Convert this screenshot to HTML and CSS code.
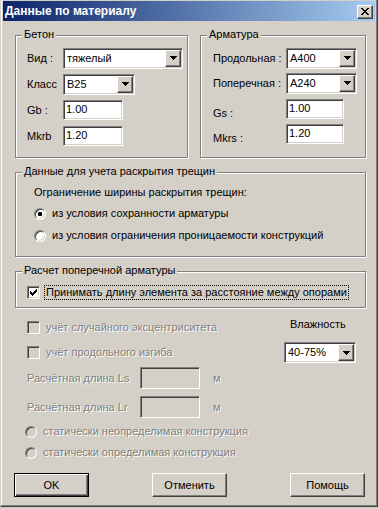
FILE: index.html
```html
<!DOCTYPE html>
<html lang="ru">
<head>
    <meta charset="UTF-8">
    <title>Данные по материалу</title>
    <link rel="stylesheet" href="styles.css">
</head>
<body>

    <div class="window">
        <div class="titlebar">
            <span class="title">Данные по материалу</span>
            <span class="close-btn">
                <svg width="8" height="7" viewBox="0 0 8 7" shape-rendering="crispEdges"><path d="M0 0h2v1H0zM6 0h2v1H6zM1 1h2v1H1zM5 1h2v1H5zM2 2h4v1H2zM3 3h2v1H3zM2 4h4v1H2zM1 5h2v1H1zM5 5h2v1H5zM0 6h2v1H0zM6 6h2v1H6z"/></svg>
            </span>
        </div>

        <div class="content">
            <div class="top-row">
                <div class="group concrete">
                    <span class="caption">Бетон</span>
                    <div class="form concrete-form">
                        <span class="label">Вид :</span>
                        <div class="combo w-120">
                            <span class="combo-text">тяжелый</span>
                            <span class="combo-btn"><svg width="7" height="4" viewBox="0 0 7 4" shape-rendering="crispEdges"><path d="M0 0h7v1H0zM1 1h5v1H1zM2 2h3v1H2zM3 3h1v1H3z"/></svg></span>
                        </div>
                        <span class="label">Класс</span>
                        <div class="combo w-72">
                            <span class="combo-text">B25</span>
                            <span class="combo-btn"><svg width="7" height="4" viewBox="0 0 7 4" shape-rendering="crispEdges"><path d="M0 0h7v1H0zM1 1h5v1H1zM2 2h3v1H2zM3 3h1v1H3z"/></svg></span>
                        </div>
                        <span class="label">Gb :</span>
                        <div class="field w-60">1.00</div>
                        <span class="label">Mkrb</span>
                        <div class="field w-60">1.20</div>
                    </div>
                </div>

                <div class="group rebar">
                    <span class="caption">Арматура</span>
                    <div class="form rebar-form">
                        <span class="label">Продольная :</span>
                        <div class="combo w-70">
                            <span class="combo-text">A400</span>
                            <span class="combo-btn"><svg width="7" height="4" viewBox="0 0 7 4" shape-rendering="crispEdges"><path d="M0 0h7v1H0zM1 1h5v1H1zM2 2h3v1H2zM3 3h1v1H3z"/></svg></span>
                        </div>
                        <span class="label">Поперечная :</span>
                        <div class="combo w-70">
                            <span class="combo-text">A240</span>
                            <span class="combo-btn"><svg width="7" height="4" viewBox="0 0 7 4" shape-rendering="crispEdges"><path d="M0 0h7v1H0zM1 1h5v1H1zM2 2h3v1H2zM3 3h1v1H3z"/></svg></span>
                        </div>
                        <span class="label low">Gs :</span>
                        <div class="field w-58">1.00</div>
                        <span class="label low">Mkrs :</span>
                        <div class="field w-58">1.20</div>
                    </div>
                </div>
            </div>

            <div class="group cracks">
                <span class="caption">Данные для учета раскрытия трещин</span>
                <div class="hint">Ограничение ширины раскрытия трещин:</div>
                <div class="option first">
                    <span class="radio checked"></span>
                    <span class="option-text">из условия сохранности арматуры</span>
                </div>
                <div class="option second">
                    <span class="radio"></span>
                    <span class="option-text">из условия ограничения проницаемости конструкций</span>
                </div>
            </div>

            <div class="group shear">
                <span class="caption">Расчет поперечной арматуры</span>
                <div class="option">
                    <span class="check">
                        <svg width="7" height="7" viewBox="0 0 7 7" shape-rendering="crispEdges"><path d="M0 2h1v3H0zM1 3h1v3H1zM2 4h1v3H2zM3 3h1v3H3zM4 2h1v3H4zM5 1h1v3H5zM6 0h1v3H6z"/></svg>
                    </span>
                    <span class="focus-text">Принимать длину элемента за расстояние между опорами</span>
                </div>
            </div>

            <div class="lower">
                <div class="lower-left">
                    <div class="option disabled">
                        <span class="check off"></span>
                        <span class="option-text">учёт случайного эксцентриситета</span>
                    </div>
                    <div class="option disabled row-2">
                        <span class="check off"></span>
                        <span class="option-text">учёт продольного изгиба</span>
                    </div>
                    <div class="length-row disabled row-ls">
                        <span class="length-label">Расчётная длина Ls</span>
                        <div class="field off w-60"></div>
                        <span class="unit">м</span>
                    </div>
                    <div class="length-row disabled row-lr">
                        <span class="length-label">Расчётная длина Lr</span>
                        <div class="field off w-60"></div>
                        <span class="unit">м</span>
                    </div>
                    <div class="option disabled static first-static">
                        <span class="radio off"></span>
                        <span class="option-text">статически неопределимая конструкция</span>
                    </div>
                    <div class="option disabled static second-static">
                        <span class="radio off"></span>
                        <span class="option-text">статически определимая конструкция</span>
                    </div>
                </div>

                <div class="lower-right">
                    <div class="humidity-label">Влажность</div>
                    <div class="combo w-72">
                        <span class="combo-text">40-75%</span>
                        <span class="combo-btn"><svg width="7" height="4" viewBox="0 0 7 4" shape-rendering="crispEdges"><path d="M0 0h7v1H0zM1 1h5v1H1zM2 2h3v1H2zM3 3h1v1H3z"/></svg></span>
                    </div>
                </div>
            </div>

            <div class="buttons">
                <div class="button default">OK</div>
                <div class="button">Отменить</div>
                <div class="button">Помощь</div>
            </div>
        </div>
    </div>

</body>
</html>
```

FILE: styles.css
```css
* {
    box-sizing: border-box;
}

body {
    margin: 0;
    padding: 0;
    background: #d4d0c8;
    font-family: "Liberation Sans", Arial, sans-serif;
    font-size: 11px;
    line-height: 13px;
    color: #000;
}

/* window frame */
.window {
    width: 378px;
    height: 507px;
    background: #d4d0c8;
    border: 1px solid;
    border-top: 0;
    border-color: #d4d0c8 #404040 #404040 #d4d0c8;
    box-shadow: inset -1px -1px 0 #808080, inset 1px 0 0 #fff;
    padding: 1px 2px 0 2px;
}

.titlebar {
    height: 20px;
    display: flex;
    justify-content: space-between;
    align-items: center;
    padding: 1px 2px 0 2px;
    background: linear-gradient(to right, #0a246a, #a6caf0);
}

.title {
    color: #fff;
    font-weight: bold;
    font-size: 12px;
}

.close-btn {
    width: 16px;
    height: 14px;
    display: flex;
    justify-content: center;
    align-items: center;
    background: #d4d0c8;
    border: 1px solid;
    border-color: #fff #404040 #404040 #fff;
    box-shadow: inset -1px -1px 0 #808080;
}

.content {
    padding: 14px 0 0 12px;
}

/* group boxes */
.group {
    position: relative;
    border: 1px solid #808080;
    box-shadow: inset 1px 1px 0 #fff, 1px 1px 0 #fff;
}

.caption {
    position: absolute;
    top: -8px;
    left: 6px;
    padding: 0 2px;
    background: #d4d0c8;
}

.top-row {
    display: flex;
    gap: 12px;
}

.concrete {
    width: 173px;
    height: 123px;
    padding: 12px 0 0 11px;
}

.rebar {
    width: 166px;
    height: 123px;
    padding: 12px 0 0 12px;
}

.form {
    display: grid;
    grid-auto-rows: 20px;
    row-gap: 6px;
    align-items: center;
    justify-items: start;
}

.concrete-form {
    grid-template-columns: 36px auto;
}

.rebar-form {
    grid-template-columns: 73px auto;
    row-gap: 5px;
}

.rebar-form .field {
    margin-top: 1px;
}

.label.low {
    align-self: end;
    margin-bottom: -2px;
}

.cracks {
    width: 351px;
    height: 85px;
    margin-top: 14px;
    padding: 13px 0 0 18px;
}

.shear {
    width: 351px;
    height: 37px;
    margin-top: 14px;
    padding: 13px 0 0 11px;
}

/* inputs */
.field {
    height: 20px;
    background: #fff;
    border: 1px solid;
    border-color: #808080 #fff #fff #808080;
    box-shadow: inset 1px 1px 0 #404040, inset -1px -1px 0 #d4d0c8;
    padding: 2px 0 0 2px;
}

.field.off {
    background: #d4d0c8;
    height: 22px;
}

.combo {
    height: 21px;
    display: flex;
    align-items: center;
    justify-content: space-between;
    background: #fff;
    border: 1px solid;
    border-color: #808080 #fff #fff #808080;
    box-shadow: inset 1px 1px 0 #404040, inset -1px -1px 0 #d4d0c8;
    padding: 1px;
}

.combo-text {
    padding-left: 2px;
}

.combo-btn {
    width: 16px;
    height: 17px;
    display: flex;
    justify-content: center;
    align-items: center;
    background: #d4d0c8;
    border: 1px solid;
    border-color: #fff #404040 #404040 #fff;
    box-shadow: inset -1px -1px 0 #808080;
}

.w-120 { width: 120px; }
.w-72 { width: 72px; }
.w-70 { width: 71px; }
.w-60 { width: 60px; }
.w-58 { width: 58px; }

/* radio and check */
.hint {
    height: 13px;
}

.option {
    display: flex;
    align-items: center;
    height: 13px;
}

.cracks .option.first {
    margin-top: 8px;
}

.cracks .option.second {
    margin-top: 9px;
}

.shear .option {
    margin-top: 1px;
}

.radio {
    position: relative;
    width: 12px;
    height: 12px;
    flex: none;
    border-radius: 50%;
    background: #fff;
    border: 1px solid;
    border-color: #808080 #fff #fff #808080;
    box-shadow: inset 1px 1px 0 #404040, inset -1px -1px 0 #d4d0c8;
    margin-right: 6px;
}

.radio.checked::after {
    content: "";
    position: absolute;
    top: 3px;
    left: 3px;
    width: 4px;
    height: 4px;
    border-radius: 1px;
    background: #000;
}

.radio.off {
    background: #d4d0c8;
}

.check {
    width: 13px;
    height: 13px;
    flex: none;
    display: flex;
    justify-content: center;
    align-items: center;
    background: #fff;
    border: 1px solid;
    border-color: #808080 #fff #fff #808080;
    box-shadow: inset 1px 1px 0 #404040, inset -1px -1px 0 #d4d0c8;
    margin-right: 6px;
}

.check.off {
    background: #d4d0c8;
}

.focus-text {
    margin-left: -2px;
    padding: 0 1px;
    height: 15px;
    line-height: 13px;
    border: 1px dotted #000;
}

/* disabled part */
.disabled {
    color: #808080;
    text-shadow: 1px 1px 0 #fff;
}

.lower {
    display: flex;
    margin-top: 13px;
    padding-left: 12px;
}

.lower-left {
    width: 257px;
}

.row-2 {
    margin-top: 12px;
}

.length-row {
    display: flex;
    align-items: center;
    height: 22px;
}

.row-ls {
    margin-top: 8px;
}

.row-lr {
    margin-top: 7px;
}

.length-label {
    width: 113px;
}

.unit {
    margin-left: 13px;
}

.static {
    margin-left: -2px;
}

.first-static {
    margin-top: 7px;
}

.second-static {
    margin-top: 8px;
}

.lower-right {
    margin-top: -3px;
}

.humidity-label {
    padding-left: 6px;
    height: 13px;
    margin-bottom: 11px;
}

/* buttons */
.buttons {
    display: flex;
    justify-content: space-between;
    width: 351px;
    margin: 14px 0 0 -1px;
}

.button {
    width: 75px;
    height: 24px;
    display: flex;
    justify-content: center;
    align-items: center;
    border: 1px solid;
    border-color: #fff #404040 #404040 #fff;
    box-shadow: inset -1px -1px 0 #808080;
}

.button.default {
    border-color: #000;
    box-shadow: inset 1px 1px 0 #fff, inset -1px -1px 0 #404040, inset -2px -2px 0 #808080;
}
```
